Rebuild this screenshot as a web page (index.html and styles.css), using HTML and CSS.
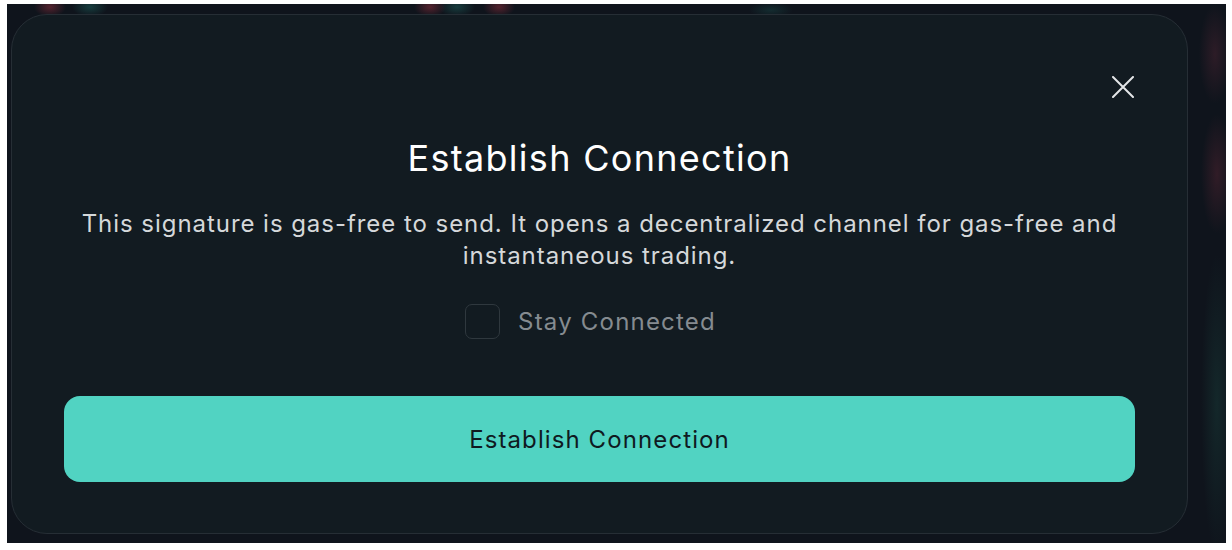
FILE: index.html
```html
<!DOCTYPE html>
<html lang="en">
<head>
    <meta charset="UTF-8">
    <meta name="viewport" content="width=device-width, initial-scale=1.0">
    <title>Establish Connection</title>
    <link rel="stylesheet" href="styles.css">
</head>
<body>
    <div class="backdrop">
        <div class="modal">
            <div class="modal-top">
                <button class="close-btn" aria-label="Close">
                    <svg width="22" height="22" viewBox="0 0 22 22">
                        <path d="M1 1 L21 21 M21 1 L1 21" stroke="#e4e6e8" stroke-width="2" stroke-linecap="round"/>
                    </svg>
                </button>
            </div>

            <h1 class="title">Establish Connection</h1>
            <p class="desc">This signature is gas-free to send. It opens a decentralized channel for gas-free and instantaneous trading.</p>

            <label class="stay">
                <span class="box"></span>
                <span>Stay Connected</span>
            </label>

            <button class="main-btn">Establish Connection</button>
        </div>
    </div>
</body>
</html>
```

FILE: styles.css
```css
body {
    margin: 0;
    background: #fff;
    font-family: Inter, "Noto Sans", sans-serif;
}

.backdrop {
    margin: 4px 6px 7px 7px;
    height: 539px;
    box-sizing: border-box;
    padding: 10px 38px 9px 4px;
    background-color: #0f141c;
    background-image:
        radial-gradient(ellipse 16px 10px at 43px 3px, rgba(140, 45, 60, 0.55), transparent),
        radial-gradient(ellipse 18px 10px at 83px 3px, rgba(30, 100, 95, 0.5), transparent),
        radial-gradient(ellipse 16px 10px at 423px 3px, rgba(140, 45, 60, 0.55), transparent),
        radial-gradient(ellipse 18px 10px at 450px 3px, rgba(30, 100, 95, 0.5), transparent),
        radial-gradient(ellipse 16px 10px at 492px 3px, rgba(140, 45, 60, 0.55), transparent),
        radial-gradient(ellipse 22px 8px at 764px 6px, rgba(30, 100, 95, 0.3), transparent),
        radial-gradient(ellipse 16px 50px at 1208px 50px, rgba(90, 40, 55, 0.4), transparent),
        radial-gradient(ellipse 16px 60px at 1210px 170px, rgba(100, 40, 55, 0.4), transparent),
        radial-gradient(ellipse 16px 150px at 1210px 400px, rgba(30, 85, 75, 0.3), transparent);
}

.modal {
    height: 100%;
    box-sizing: border-box;
    background: #121b21;
    border: 1px solid #262e35;
    border-radius: 36px;
    padding: 61px 52px 0 52px;
    display: flex;
    flex-direction: column;
    align-items: center;
}

.modal-top {
    align-self: stretch;
    display: flex;
    justify-content: flex-end;
    padding-right: 1px;
}

.close-btn {
    background: none;
    border: none;
    padding: 0;
    width: 22px;
    height: 22px;
    cursor: pointer;
    display: flex;
}

.title {
    margin: 38px 0 0;
    font-size: 36px;
    line-height: 44px;
    font-weight: 400;
    letter-spacing: 1.3px;
    color: #fff;
}

.desc {
    margin: 28px 0 0;
    font-size: 24px;
    line-height: 32px;
    letter-spacing: 0.95px;
    color: #d5d8da;
    text-align: center;
}

.stay {
    margin-top: 32px;
    display: flex;
    align-items: center;
    gap: 18px;
    font-size: 24px;
    letter-spacing: 1.2px;
    color: #858b90;
    margin-right: 18px;
}

.box {
    width: 33px;
    height: 33px;
    border: 1px solid #2f383e;
    border-radius: 7px;
}

.main-btn {
    margin-top: 57px;
    align-self: stretch;
    height: 86px;
    border: none;
    border-radius: 16px;
    background: #51d3c2;
    color: #0f1a1f;
    font-family: inherit;
    font-size: 24px;
    letter-spacing: 1.1px;
    cursor: pointer;
}
```
